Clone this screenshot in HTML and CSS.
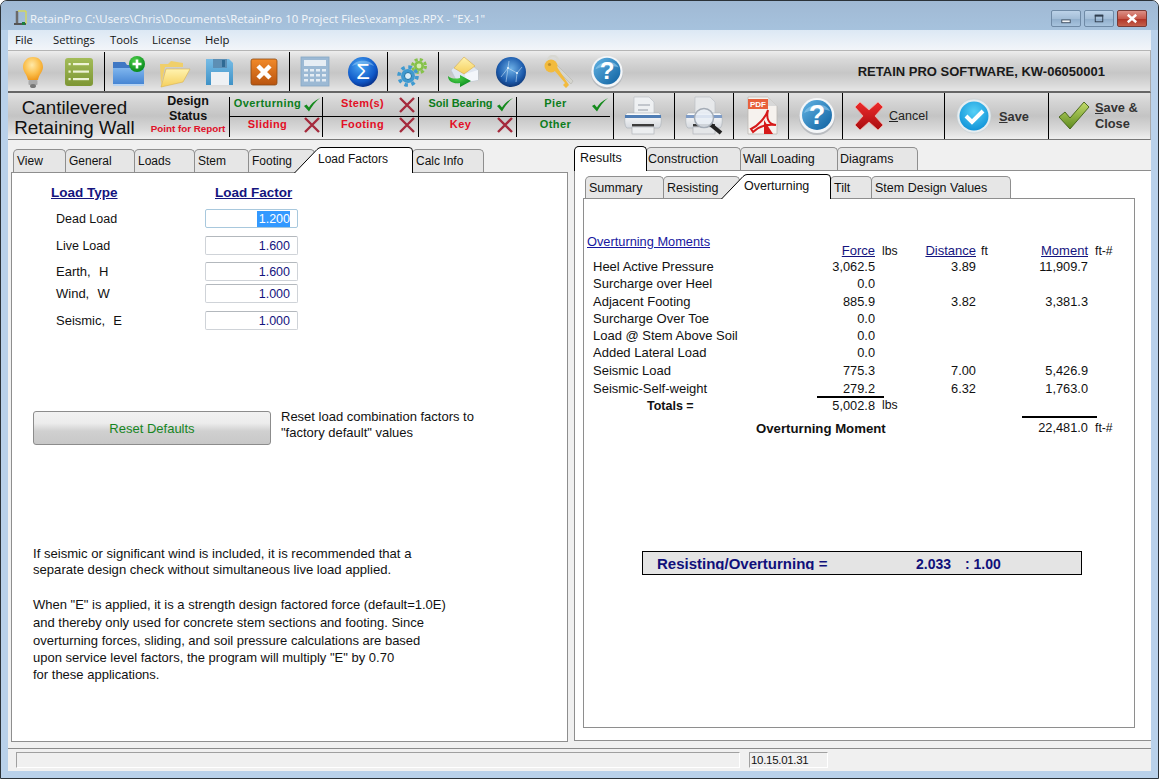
FILE: index.html
```html
<!DOCTYPE html>
<html lang="en">
<head>
<meta charset="utf-8">
<title>RetainPro</title>
<link rel="stylesheet" href="styles.css">
</head>
<body>
<svg class="defs" aria-hidden="true">
  <defs>
    <radialGradient id="gBulb" cx="45%" cy="35%" r="65%"><stop offset="0" stop-color="#ffe9a8"/><stop offset=".6" stop-color="#fbbf4c"/><stop offset="1" stop-color="#ef9a1e"/></radialGradient>
    <linearGradient id="gOlive" x1="0" y1="0" x2="0" y2="1"><stop offset="0" stop-color="#a3bc58"/><stop offset="1" stop-color="#7d9634"/></linearGradient>
    <linearGradient id="gFolder" x1="0" y1="0" x2="0" y2="1"><stop offset="0" stop-color="#7fb6ee"/><stop offset="1" stop-color="#3f7fd0"/></linearGradient>
    <radialGradient id="gGreen" cx="40%" cy="30%" r="70%"><stop offset="0" stop-color="#4fd04a"/><stop offset="1" stop-color="#078a1c"/></radialGradient>
    <linearGradient id="gYellow" x1="0" y1="0" x2="0" y2="1"><stop offset="0" stop-color="#fff3b0"/><stop offset="1" stop-color="#f5cf5c"/></linearGradient>
    <linearGradient id="gDisk" x1="0" y1="0" x2="0" y2="1"><stop offset="0" stop-color="#77bce6"/><stop offset="1" stop-color="#3f92c6"/></linearGradient>
    <linearGradient id="gOrange" x1="0" y1="0" x2="0" y2="1"><stop offset="0" stop-color="#f28a2a"/><stop offset="1" stop-color="#b9540f"/></linearGradient>
    <radialGradient id="gSigma" cx="40%" cy="30%" r="75%"><stop offset="0" stop-color="#4aa6f2"/><stop offset=".7" stop-color="#0f58c8"/><stop offset="1" stop-color="#06297e"/></radialGradient>
    <radialGradient id="gGlobe" cx="50%" cy="40%" r="65%"><stop offset="0" stop-color="#6fb2e8"/><stop offset=".65" stop-color="#1d5cad"/><stop offset="1" stop-color="#0b2c66"/></radialGradient>
    <linearGradient id="gHelp" x1="0" y1="0" x2="1" y2="1"><stop offset="0" stop-color="#63b4e4"/><stop offset="1" stop-color="#0d5f9f"/></linearGradient>
    <linearGradient id="gRed" x1="0" y1="0" x2="0" y2="1"><stop offset="0" stop-color="#ee2b2b"/><stop offset="1" stop-color="#a80c10"/></linearGradient>
    <radialGradient id="gCyan" cx="50%" cy="35%" r="70%"><stop offset="0" stop-color="#56d0f6"/><stop offset="1" stop-color="#0b8fd6"/></radialGradient>
    <linearGradient id="gCheck" x1="0" y1="0" x2="0" y2="1"><stop offset="0" stop-color="#c4dc6c"/><stop offset="1" stop-color="#5d8a1e"/></linearGradient>
    <linearGradient id="gPrinter" x1="0" y1="0" x2="0" y2="1"><stop offset="0" stop-color="#fdfdfd"/><stop offset="1" stop-color="#d5d9df"/></linearGradient>
    <symbol id="help" viewBox="0 0 38 38">
      <circle cx="19" cy="20" r="18" fill="#b9bcc0"/>
      <circle cx="19" cy="18.500" r="17.500" fill="#f4f6f8"/>
      <circle cx="19" cy="18" r="15" fill="url(#gHelp)"/>
      <path d="M6 16C10 6 28 5 32 14C25 11 14 12 6 16Z" fill="#9fd3f2" opacity=".55"/>
      <text x="19" y="27" class="glyph-q">?</text>
    </symbol>
    <symbol id="chk" viewBox="0 0 18 16">
      <path d="M1 9L6 14.500C9 9 12 5 17 1C11 4 8 7 6 10.500L3.500 7.500Z" fill="#148a1c"/>
    </symbol>
    <symbol id="crs" viewBox="0 0 18 16">
      <path d="M2 1L16 15M16 1L2 15" stroke="#a52a3c" stroke-width="2.400" fill="none"/>
    </symbol>
  </defs>
</svg>
<div class="window">
  <header class="titlebar">
    <svg class="app-icon" viewBox="0 0 14 16">
      <path d="M4 1V13" stroke="#6a6a6a" stroke-width="2.500"/>
      <path d="M5 1H13V14H8" stroke="#e7e22a" fill="none"/>
      <path d="M1 14H13" stroke="#555" stroke-width="2"/>
      <rect x="9" y="12" width="3" height="3" fill="#1a7f3c"/>
    </svg>
    <span class="title-text">RetainPro C:\Users\Chris\Documents\RetainPro 10 Project Files\examples.RPX - "EX-1"</span>
    <div class="caption">
      <span class="cap-btn"><svg viewBox="0 0 29 16" class="cap-svg"><rect x="10" y="9.500" width="9" height="3" fill="#f4f6f8" stroke="#3c4d60"/></svg></span>
      <span class="cap-btn"><svg viewBox="0 0 29 16" class="cap-svg"><rect x="10.500" y="4.500" width="8" height="7" fill="none" stroke="#2f3d4e" stroke-width="1"/><rect x="10" y="4" width="9" height="2" fill="#2f3d4e"/></svg></span>
      <span class="cap-btn cap-close"><svg viewBox="0 0 29 16" class="cap-svg"><path d="M10 4L19 12M19 4L10 12" stroke="#fff" stroke-width="2.600"/></svg></span>
    </div>
  </header>
  <nav class="menubar">
    <span class="menu-item menu-file">File</span>
    <span class="menu-item menu-settings">Settings</span>
    <span class="menu-item menu-tools">Tools</span>
    <span class="menu-item menu-license">License</span>
    <span class="menu-item">Help</span>
  </nav>

  <div class="toolbar">
    <div class="tb-group g1">
      <span class="tb-btn"><svg class="ico" viewBox="0 0 34 34"><path d="M17 2C10.500 2 7 7 7 12C7 17 11 19 12 25H22C23 19 27 17 27 12C27 7 23.500 2 17 2Z" fill="url(#gBulb)"/><rect x="12.500" y="25" width="9" height="5" rx="1" fill="#a9a9a9"/><ellipse cx="17" cy="31" rx="3" ry="2" fill="#777"/></svg></span>
      <span class="tb-btn"><svg class="ico" viewBox="0 0 34 34"><rect x="3" y="3" width="28" height="28" rx="3" fill="url(#gOlive)"/><g fill="#eef3d6"><rect x="11" y="8" width="16" height="2.200"/><rect x="11" y="15.500" width="16" height="2.200"/><rect x="11" y="23" width="16" height="2.200"/><rect x="6.500" y="8" width="2.200" height="2.200"/><rect x="6.500" y="15.500" width="2.200" height="2.200"/><rect x="6.500" y="23" width="2.200" height="2.200"/></g></svg></span>
    </div>
    <div class="tb-group g2">
      <span class="tb-btn"><svg class="ico" viewBox="0 0 34 34"><path d="M1 7H13L15 10H32V31H1Z" fill="#3f78c4"/><path d="M1 13H32V31H1Z" fill="url(#gFolder)"/><rect x="1" y="29" width="31" height="2" fill="#b8d4f2"/><circle cx="25" cy="9" r="8" fill="url(#gGreen)"/><path d="M25 4.500V13.500M20.500 9H29.500" stroke="#fff" stroke-width="2.600"/></svg></span>
      <span class="tb-btn"><svg class="ico" viewBox="0 0 34 34"><path d="M4 30L3 9H11L14 6L26 8V12H8Z" fill="#f0cf6a"/><path d="M4 32L9 14H33L26 27Z" fill="url(#gYellow)" stroke="#dcb44c" stroke-width=".6"/></svg></span>
      <span class="tb-btn"><svg class="ico" viewBox="0 0 34 34"><path d="M4 4H27L31 8V30H4Z" fill="url(#gDisk)"/><rect x="11" y="4" width="14" height="9" fill="#5d8fb5"/><rect x="20" y="5" width="3" height="7" fill="#2f6a94"/><rect x="9" y="17" width="18" height="13" fill="#eef1f4"/></svg></span>
      <span class="tb-btn"><svg class="ico" viewBox="0 0 34 34"><rect x="4" y="4" width="26" height="26" rx="2" fill="url(#gOrange)" stroke="#8e4a12" stroke-width=".8"/><path d="M11 11L23 23M23 11L11 23" stroke="#fff" stroke-width="4.500"/></svg></span>
    </div>
    <div class="tb-group g3">
      <span class="tb-btn"><svg class="ico" viewBox="0 0 34 34"><rect x="3" y="2" width="28" height="29" fill="#9cb9d4" stroke="#87a8c6" stroke-width=".8"/><rect x="6" y="5" width="22" height="6" fill="#e6edf4"/><g fill="#e4ecf3"><rect x="6" y="14" width="4" height="2.500"/><rect x="12" y="14" width="4" height="2.500"/><rect x="18" y="14" width="4" height="2.500"/><rect x="24" y="14" width="4" height="2.500"/><rect x="6" y="19" width="4" height="2.500"/><rect x="12" y="19" width="4" height="2.500"/><rect x="18" y="19" width="4" height="2.500"/><rect x="24" y="19" width="4" height="2.500"/><rect x="6" y="24" width="4" height="2.500"/><rect x="12" y="24" width="4" height="2.500"/><rect x="18" y="24" width="4" height="2.500"/><rect x="24" y="24" width="4" height="2.500"/></g></svg></span>
      <span class="tb-btn"><svg class="ico" viewBox="0 0 34 34"><circle cx="17" cy="17" r="15" fill="url(#gSigma)"/><path d="M6 11C10 4 24 4 28 11C22 8 12 8 6 11Z" fill="#a7d8f8" opacity=".45"/><text x="17" y="24" class="glyph-s">Σ</text></svg></span>
    </div>
    <div class="tb-group g4">
      <span class="tb-btn"><svg class="ico" viewBox="0 0 34 34"><circle cx="24" cy="11" r="5" fill="#86c24a"/><circle cx="24" cy="11" r="6.500" fill="none" stroke="#86c24a" stroke-width="3" stroke-dasharray="3 2.100"/><circle cx="24" cy="11" r="2.400" fill="#d6eeb4"/><circle cx="13" cy="21" r="7" fill="#3f9ad0"/><circle cx="13" cy="21" r="9" fill="none" stroke="#3f9ad0" stroke-width="3.600" stroke-dasharray="3.500 3.570"/><circle cx="13" cy="21" r="3.500" fill="#d9eef8" stroke="#1e6f9f"/></svg></span>
    </div>
    <div class="tb-group g5">
      <span class="tb-btn"><svg class="ico" viewBox="0 0 34 34"><path d="M5 15L18 4L32 15V25L12 29Z" fill="#dfe6f0" stroke="#b7c2d2" stroke-width=".6"/><path d="M8 13L18 2L29 11L18 19Z" fill="url(#gYellow)" stroke="#d4a94a" stroke-width=".6"/><path d="M19 19L32 15V25L20 27Z" fill="#f3f6fa"/><path d="M2 21C2 27 8 29 14 28V32L25 26L14 20V23C10 24 5 24 2 21Z" fill="url(#gGreen)"/></svg></span>
      <span class="tb-btn"><svg class="ico" viewBox="0 0 34 34"><circle cx="17" cy="17" r="15" fill="url(#gGlobe)"/><path d="M7 22L14 13L23 18L28 12M14 13L15 6M14 13L12 27M23 18L22 27" stroke="#cfe6f8" stroke-width=".7" fill="none" opacity=".8"/><circle cx="14" cy="13" r="1" fill="#eaf6ff"/><circle cx="23" cy="18" r="1" fill="#eaf6ff"/></svg></span>
      <span class="tb-btn"><svg class="ico" viewBox="0 0 34 34"><circle cx="11" cy="6" r="5" fill="none" stroke="#d8d8d2" stroke-width="2.500"/><path d="M14 9L31 26L29 29L12 12Z" fill="#d5d5cf" stroke="#aeaea6" stroke-width=".5"/><circle cx="9" cy="11" r="6.500" fill="#f2bb3e"/><circle cx="7.500" cy="9.500" r="1.600" fill="#c08f28"/><path d="M12 15L23 28L21 30L24 33L27 30L25 27L15 12Z" fill="#f2bb3e"/></svg></span>
      <span class="tb-btn"><svg class="ico" viewBox="0 0 34 34"><use href="#help" width="34" height="34"/></svg></span>
    </div>
    <div class="licence">RETAIN PRO SOFTWARE, KW-06050001</div>
  </div>

  <div class="statusband">
    <div class="wall-title"><span>Cantilevered</span><span>Retaining Wall</span></div>
    <div class="design"><span>Design</span><span>Status</span><span class="point">Point for Report</span></div>
    <div class="checks">
      <div class="ck ck1 ok top">Overturning<svg class="mark"><use href="#chk"/></svg></div>
      <div class="ck ck2 bad top">Stem(s)<svg class="mark"><use href="#crs"/></svg></div>
      <div class="ck ck3 ok top">Soil Bearing<svg class="mark"><use href="#chk"/></svg></div>
      <div class="ck ck4 ok top">Pier<svg class="mark"><use href="#chk"/></svg></div>
      <div class="ck ck1 bad">Sliding<svg class="mark"><use href="#crs"/></svg></div>
      <div class="ck ck2 bad">Footing<svg class="mark"><use href="#crs"/></svg></div>
      <div class="ck ck3 bad">Key<svg class="mark"><use href="#crs"/></svg></div>
      <div class="ck ck4 ok">Other</div>
    </div>
    <div class="act a-print"><svg class="ico-lg" viewBox="0 0 38 40"><path d="M10 1H25L30 6V22H10Z" fill="#eef0f2" stroke="#bcc0c6" stroke-width=".7"/><path d="M14 9H26M14 14H24" stroke="#c2c6cc" stroke-width="2"/><path d="M3 17H35C38 18 38 31 35 32H3C0 31 0 18 3 17Z" fill="url(#gPrinter)" stroke="#a8aeb6" stroke-width=".6"/><rect x="1" y="19" width="36" height="3" fill="#4f7db5"/><rect x="8" y="28" width="22" height="2.500" fill="#3c3c3c"/><rect x="8" y="31" width="22" height="7" fill="#eceef0" stroke="#a8acb2" stroke-width=".6"/></svg></div>
    <div class="act a-prev"><svg class="ico-lg" viewBox="0 0 38 40"><path d="M10 1H25L30 6V22H10Z" fill="#e6e8ea" stroke="#bcc0c6" stroke-width=".7"/><path d="M3 17H35C38 18 38 31 35 32H3C0 31 0 18 3 17Z" fill="url(#gPrinter)" stroke="#a8aeb6" stroke-width=".6"/><rect x="1" y="19" width="36" height="3" fill="#7f9cc6"/><rect x="8" y="28" width="22" height="2.500" fill="#3c3c3c"/><rect x="8" y="31" width="22" height="7" fill="#e4e6e8" stroke="#a8acb2" stroke-width=".6"/><path d="M25 28L36 37" stroke="#222" stroke-width="4"/><circle cx="19" cy="22" r="9.500" fill="#e9eff6" fill-opacity=".85" stroke="#a4acb6" stroke-width="1.500"/></svg></div>
    <div class="act a-pdf"><svg class="ico-lg" viewBox="0 0 38 40"><path d="M6 1H26L35 10V38H6Z" fill="#f6f2ee" stroke="#bdb9b4" stroke-width=".8"/><path d="M26 1V10H35Z" fill="#d8d8d8"/><rect x="6" y="3" width="20" height="10" fill="#e8613c"/><text x="16" y="11" class="glyph-pdf">PDF</text><path d="M9 33C16 30 24 21 26 14C24 22 26 28 34 29C25 28 17 30 11 36Z" fill="none" stroke="#d61a1a" stroke-width="2"/><path d="M22 24L22 38H31Z" fill="#d61a1a"/></svg></div>
    <div class="act a-help"><svg class="ico-help" viewBox="0 0 38 38"><use href="#help" width="38" height="38"/></svg></div>
    <div class="act a-cancel"><svg class="ico-act" viewBox="0 0 32 32"><path d="M2 7L7 2L16 10L25 2L30 7L22 16L30 25L25 30L16 22L7 30L2 25L10 16Z" fill="url(#gRed)" stroke="#f6b0a8" stroke-width=".8"/></svg><span class="act-text cancel-text"><u>C</u>ancel</span></div>
    <div class="act a-save"><svg class="ico-save" viewBox="0 0 36 36"><circle cx="18" cy="18" r="17" fill="#e7edf0" stroke="#c3ccd2" stroke-width=".6"/><circle cx="18" cy="18" r="14.500" fill="url(#gCyan)"/><path d="M10 18L16 24L27 13" stroke="#fff" stroke-width="4" fill="none"/></svg><span class="act-text save-text"><u>S</u>ave</span></div>
    <div class="act a-close"><svg class="ico-act" viewBox="0 0 32 32"><path d="M1 17L7 12L12 18L26 2L31 7L12 29Z" fill="url(#gCheck)" stroke="#3f5f14" stroke-width=".9"/></svg><span class="act-text close-text"><span><u>S</u>ave &amp;</span><span>Close</span></span></div>
  </div>

  <main class="main">
    <section class="left">
      <div class="tabs tabs-left">
        <div class="tab tl1">View</div>
        <div class="tab tl2">General</div>
        <div class="tab tl3">Loads</div>
        <div class="tab tl4">Stem</div>
        <div class="tab tl5">Footing</div>
        <div class="tab tab-slant tl6">
          <svg class="slant" viewBox="0 0 119 26" preserveAspectRatio="none"><path d="M0.500 26L23 2.500Q25 .5 27 .5H115Q118.500 .5 118.500 4V26" fill="#fff" stroke="#000"/></svg>
          <span class="slant-text">Load Factors</span>
        </div>
        <div class="tab tl7">Calc Info</div>
      </div>
      <div class="panel-left">
        <div class="lf-head"><span class="lf-h1">Load Type</span><span class="lf-h2">Load Factor</span></div>
        <div class="lf-row r1"><span class="lf-label">Dead Load</span><span class="field field-on"><span class="sel">1.200</span></span></div>
        <div class="lf-row r2"><span class="lf-label">Live Load</span><span class="field">1.600</span></div>
        <div class="lf-row r3"><span class="lf-label lf-wide">Earth,&nbsp; H</span><span class="field">1.600</span></div>
        <div class="lf-row r4"><span class="lf-label lf-wide">Wind,&nbsp; W</span><span class="field">1.000</span></div>
        <div class="lf-row r5"><span class="lf-label lf-wide">Seismic,&nbsp; E</span><span class="field">1.000</span></div>
        <div class="reset-row">
          <div class="reset-btn">Reset Defaults</div>
          <p class="reset-note">Reset load combination factors to<br>"factory default" values</p>
        </div>
        <div class="note n1">
          <div>If seismic or significant wind is included, it is recommended that a</div>
          <div>separate design check without simultaneous live load applied.</div>
        </div>
        <div class="note n2">
          <div class="h18">When "E" is applied, it is a strength design factored force (default=1.0E)</div>
          <div class="h18">and thereby only used for concrete stem sections and footing. Since</div>
          <div class="h18">overturning forces, sliding, and soil pressure calculations are based</div>
          <div class="h16">upon service level factors, the program will multiply "E" by 0.70</div>
          <div class="h18">for these applications.</div>
        </div>
      </div>
    </section>

    <section class="right">
      <div class="tabs tabs-right">
        <div class="tab tab-on tr1">Results</div>
        <div class="tab tr2">Construction</div>
        <div class="tab tr3">Wall Loading</div>
        <div class="tab tr4">Diagrams</div>
      </div>
      <div class="panel-outer">
        <div class="tabs tabs-inner">
          <div class="tab ti1">Summary</div>
          <div class="tab ti2">Resisting</div>
          <div class="tab tab-slant ti3">
            <svg class="slant" viewBox="0 0 110 25" preserveAspectRatio="none"><path d="M0.500 25L22 2.500Q24 .5 26 .5H106Q109.500 .5 109.500 4V25" fill="#fff" stroke="#000"/></svg>
            <span class="slant-text">Overturning</span>
          </div>
          <div class="tab ti4">Tilt</div>
          <div class="tab ti5">Stem Design Values</div>
        </div>
        <div class="panel-inner">
          <div class="ot">
            <div class="ot-head"><span class="ot-title">Overturning Moments</span></div>
            <div class="hd num end">Force</div><div class="unit end">lbs</div><div class="hd num end">Distance</div><div class="unit unit-ft end">ft</div><div class="hd num end">Moment</div><div class="unit end">ft-#</div>

            <div class="lab">Heel Active Pressure</div><div class="num">3,062.5</div><div></div><div class="num">3.89</div><div></div><div class="num">11,909.7</div><div></div>
            <div class="lab">Surcharge over Heel</div><div class="num">0.0</div><div></div><div></div><div></div><div></div><div></div>
            <div class="lab">Adjacent Footing</div><div class="num">885.9</div><div></div><div class="num">3.82</div><div></div><div class="num">3,381.3</div><div></div>
            <div class="lab">Surcharge Over Toe</div><div class="num">0.0</div><div></div><div></div><div></div><div></div><div></div>
            <div class="lab">Load @ Stem Above Soil</div><div class="num">0.0</div><div></div><div></div><div></div><div></div><div></div>
            <div class="lab">Added Lateral Load</div><div class="num">0.0</div><div></div><div></div><div></div><div></div><div></div>
            <div class="lab">Seismic Load</div><div class="num">775.3</div><div></div><div class="num">7.00</div><div></div><div class="num">5,426.9</div><div></div>
            <div class="lab">Seismic-Self-weight</div><div class="num rule-force">279.2</div><div></div><div class="num">6.32</div><div></div><div class="num">1,763.0</div><div></div>
            <div class="lab total-lab">Totals =</div><div class="num">5,002.8</div><div class="unit">lbs</div><div></div><div></div><div></div><div></div>
            <div class="lab om-lab"><span class="clip">Overturning Moment</span></div><div></div><div></div><div></div><div></div><div class="num rule-moment end">22,481.0</div><div class="unit end">ft-#</div>
          </div>
          <div class="ratio"><div class="ratio-clip"><span class="ratio-a">Resisting/Overturning =</span><span class="ratio-b">2.033</span><span class="ratio-c">: 1.00</span></div></div>
        </div>
      </div>
    </section>
  </main>

  <footer class="statusbar">
    <div class="sb-box sb-1"></div>
    <div class="sb-box sb-2">10.15.01.31</div>
  </footer>
</div>
</body>
</html>
```
FILE: styles.css
```css
* { box-sizing: border-box; }
html, body { margin: 0; padding: 0; }
body {
  width: 1159px;
  height: 779px;
  overflow: hidden;
  background: #fff;
  font-family: "Liberation Sans", Arial, sans-serif;
  font-size: 12px;
  color: #111;
}
.defs { position: absolute; width: 0; height: 0; }
.glyph-q { font: bold 27px "Liberation Sans", Arial, sans-serif; fill: #fff; text-anchor: middle; }
.glyph-s { font: 22px "Liberation Sans", Arial, sans-serif; fill: #fff; text-anchor: middle; }
.glyph-pdf { font: bold 8px "Liberation Sans", Arial, sans-serif; fill: #fff; text-anchor: middle; }

.window {
  width: 1159px;
  height: 779px;
  padding: 0 7px 7px;
  border: 1px solid #2b3238;
  border-radius: 7px 7px 0 0;
  background: #b9d1ea;
  display: flex;
  flex-direction: column;
  overflow: hidden;
}

/* title bar */
.titlebar {
  height: 29px;
  margin: 0 -7px;
  padding: 6px 11px 0 12px;
  display: flex;
  align-items: center;
  background: linear-gradient(#a0b9d4, #a6c2dd);
  flex: none;
}
.app-icon { width: 14px; height: 16px; margin-right: 3px; margin-top: -2px; flex: none; }
.title-text {
  font-family: "Open Sans", sans-serif;
  font-size: 11.4px;
  color: #f2f6fa;
  white-space: nowrap;
}
.caption { margin-left: auto; display: flex; gap: 3px; }
.cap-btn {
  width: 30px;
  height: 17px;
  border: 1px solid #6f8aa6;
  border-radius: 2px;
  background: linear-gradient(#bcd2e8 0, #a4bed8 50%, #8fadcb 51%, #a8c4de 100%);
  display: block;
}
.cap-close { background: linear-gradient(#dc9086 0, #c85a4c 50%, #b03224 51%, #c4604c 100%); border-color: #7a3a34; }
.cap-svg { display: block; width: 28px; height: 15px; }

/* menu */
.menubar {
  height: 20px;
  padding: 0 0 2px 7px;
  display: flex;
  align-items: center;
  flex: none;
  background: linear-gradient(#dce8f4, #f2f5f9);
  font-family: "Open Sans", sans-serif;
  font-size: 11.3px;
  color: #111;
}
.menu-file { width: 38px; }
.menu-settings { width: 57px; }
.menu-tools { width: 42px; }
.menu-license { width: 53px; }

/* toolbar */
.toolbar {
  height: 43px;
  flex: none;
  display: flex;
  align-items: stretch;
  background: linear-gradient(#ededed 0, #d9d9d9 20%, #c6c6c6 55%, #d6d6d6 80%, #e6e6e6 100%);
  border-top: 1px solid #b5b5b5;
  border-bottom: 2px solid #666;
  border-right: 1px solid #aaa;
}
.tb-group { display: flex; border-right: 1px solid #000; flex: none; height: 39px; margin-top: 1px; }
.g1 { padding: 0 2px; width: 97px; }
.g2 { padding-left: 1px; width: 185px; }
.g3 { padding-left: 1px; width: 98px; }
.g4 { width: 51px; }
.g5 { border-right: 0; }
.tb-btn { width: 48px; display: flex; align-items: center; justify-content: center; }
.g1 .tb-btn { width: 46px; }
.g2 .tb-btn { width: 45px; }
.ico { width: 34px; height: 34px; display: block; }
.licence {
  margin-left: auto;
  padding: 1px 45px 0 0;
  align-self: center;
  font-weight: bold;
  font-size: 13px;
  color: #1a1a1a;
  white-space: nowrap;
}

/* status band */
.statusband {
  height: 47px;
  flex: none;
  display: flex;
  background: linear-gradient(#e2e2e2 0, #d4d4d4 20%, #c4c4c4 50%, #d8d8d8 78%, #efefef 100%);
  border-bottom: 1px solid #777;
  border-right: 1px solid #aaa;
}
.wall-title {
  width: 133px;
  display: flex;
  flex-direction: column;
  align-items: center;
  font-size: 18.8px;
  line-height: 19.5px;
  padding-top: 5px;
  color: #111;
  white-space: nowrap;
}
.design {
  width: 82px;
  margin-left: 6px;
  display: flex;
  flex-direction: column;
  align-items: center;
  font-weight: bold;
  font-size: 12.5px;
  line-height: 15px;
  padding-top: 1px;
}
.design .point { color: #e0102a; font-size: 9.8px; line-height: 11px; margin-top: -1px; white-space: nowrap; }
.checks {
  width: 381px;
  height: 40px;
  margin: 4px 3px 0 0;
  display: grid;
  grid-template-columns: 93px 96px 98px 94px;
  grid-template-rows: 20px 20px;
  font-weight: bold;
  font-size: 11px;
  letter-spacing: .4px;
  line-height: 13px;
}
.ck {
  border-left: 1px solid #000;
  display: flex;
  justify-content: center;
  position: relative;
  padding-top: 1px;
  white-space: nowrap;
}
.top { border-bottom: 1px solid #000; padding-top: 0; }
.ck1 { padding-right: 17px; }
.ck2 { padding-right: 16px; }
.ck3 { padding-right: 14px; }
.ck3.top { letter-spacing: 0; }
.ck4 { padding-right: 16px; }
.ok { color: #0c7d1c; }
.bad { color: #e20f25; }
.mark { position: absolute; right: 1px; top: 0; width: 18px; height: 16px; }
.ck2 .mark { right: 2px; }
.ck3 .mark { right: 2px; }
.ck4 .mark { right: 1px; }
.act {
  border-left: 1px solid #000;
  display: flex;
  align-items: center;
  flex: none;
}
.a-print { width: 61px; padding-left: 10px; }
.a-prev { width: 59px; padding-left: 10px; }
.a-pdf { width: 55px; padding-left: 8px; }
.a-help { width: 54px; padding-left: 9px; }
.a-cancel { width: 102px; padding-left: 10px; }
.a-save { width: 104px; padding-left: 11px; }
.a-close { flex: 1; padding-left: 9px; }
.ico-lg { width: 38px; height: 40px; display: block; flex: none; }
.ico-help { width: 38px; height: 38px; display: block; }
.ico-act { width: 32px; height: 32px; display: block; flex: none; }
.ico-save { width: 36px; height: 36px; display: block; flex: none; }
.act-text { color: #222; white-space: nowrap; }
.cancel-text { margin-left: 4px; font-size: 12.5px; }
.save-text { margin-left: 7px; font-size: 12.8px; font-weight: bold; color: #333; }
.close-text { margin-left: 5px; display: flex; flex-direction: column; font-weight: bold; font-size: 12.8px; line-height: 16px; color: #333; }

/* main */
.main {
  height: 608px;
  flex: none;
  display: flex;
  background: #f0f0f0;
}
.left { width: 563px; padding-left: 3px; margin-right: 3px; padding-top: 7px; flex: none; }
.right { flex: 1; padding-top: 6px; min-width: 0; }

/* tabs */
.tabs { display: flex; align-items: flex-end; font-size: 12.5px; color: #111; }
.tabs-left { height: 25px; padding-left: 2px; font-size: 12px; }
.tabs-right { height: 24px; position: relative; z-index: 1; }
.tabs-inner { height: 24px; margin: 3px 0 0; padding-left: 2px; position: relative; z-index: 1; }
.tab {
  flex: none;
  height: 23px;
  line-height: 23px;
  padding-left: 3px;
  margin-right: -1px;
  background: #e6e6e6;
  border: 1px solid #8e8e8e;
  border-bottom: 0;
  border-radius: 5px 5px 0 0;
  white-space: nowrap;
  overflow: hidden;
}
.tabs-inner .tab { height: 22px; line-height: 22px; }
.tabs-right .tab { height: 23px; line-height: 22px; padding-left: 1px; }
.tabs-right .tr3, .tabs-right .tr4 { padding-left: 2px; }
.tabs-right .tab-on {
  height: 25px;
  line-height: 22px;
  background: #fff;
  border-color: #000;
  margin-bottom: -1px;
  position: relative;
  z-index: 2;
  padding-left: 5px;
}
.tabs .tab-slant {
  position: relative;
  z-index: 2;
  background: none;
  border: 0;
  padding: 0;
  overflow: visible;
  margin-bottom: -1px;
}
.tabs-left .tab-slant { height: 26px; line-height: 24px; }
.tabs-inner .tab-slant { height: 25px; line-height: 24px; }
.slant { position: absolute; left: 0; top: 0; width: 100%; height: 100%; display: block; }
.slant-text { position: relative; }
.tl6 .slant-text { margin-left: 24px; }
.ti3 .slant-text { margin-left: 23px; }
.tl1 { width: 53px; } .tl2 { width: 70px; } .tl3 { width: 61px; } .tl4 { width: 55px; }
.tl5 { width: 67px; }
.tabs-left .tl6 { width: 119px; margin-left: -20px; margin-right: -1px; }
.tl7 { width: 72px; }
.tr1 { width: 73px; } .tr2 { width: 95px; } .tr3 { width: 98px; } .tr4 { width: 81px; }
.ti1 { width: 79px; } .ti2 { width: 77px; }
.tabs-inner .ti3 { width: 110px; margin-left: -18px; margin-right: -1px; }
.ti4 { width: 42px; } .ti5 { width: 140px; }

/* left panel */
.panel-left {
  width: 557px;
  height: 570px;
  background: #fff;
  border: 1px solid #8e8e8e;
  padding: 12px 0 0 21px;
  overflow: hidden;
}
.lf-head { display: flex; height: 16px; line-height: 16px; font-weight: bold; font-size: 13.5px; color: #14147e; text-decoration: underline; margin-left: 18px; }
.lf-h1 { width: 164px; }
.lf-row { display: flex; align-items: center; height: 19px; padding-left: 23px; }
.r1 { margin-top: 8px; }
.r2 { margin-top: 8px; }
.r3 { margin-top: 7px; }
.r4 { margin-top: 3px; }
.r5 { margin-top: 8px; }
.lf-label { width: 149px; font-size: 12.5px; flex: none; white-space: nowrap; }
.lf-wide { font-size: 13px; word-spacing: .5px; }
.field {
  width: 93px;
  height: 19px;
  line-height: 17px;
  padding-top: 1px;
  flex: none;
  text-align: right;
  padding-right: 7px;
  border: 1px solid #cfd3d8;
  border-top-color: #b3b8bd;
  border-radius: 2px;
  color: #14147e;
  font-size: 12.5px;
  background: #fff;
}
.field-on { border-color: #a8c8dd; }
.sel { display: inline-block; background: #3399ff; color: #fff; line-height: 16px; height: 16px; padding-left: 2px; vertical-align: top; }
.reset-row { display: flex; margin-top: 81px; height: 34px; }
.reset-btn {
  width: 238px;
  height: 34px;
  line-height: 33px;
  text-align: center;
  color: #17851f;
  font-size: 13px;
  border: 1px solid #8c8c8c;
  border-radius: 3px;
  background: linear-gradient(#f2f2f2 0, #ececec 35%, #d0d0d0 60%, #c8c8c8 100%);
  flex: none;
}
.reset-note { margin: -2px 0 0 10px; font-size: 13px; line-height: 16px; white-space: nowrap; }
.note { font-size: 13px; white-space: nowrap; }
.n1 { margin-top: 101px; line-height: 16px; font-size: 13.1px; }
.n2 { margin-top: 18px; }
.h18 { height: 18px; line-height: 18px; }
.h16 { height: 16px; line-height: 16px; }

/* right panels */
.panel-outer {
  height: 571px;
  background: #fff;
  border: 1px solid #8e8e8e;
  border-right: 0;
  padding-left: 8px;
}
.panel-inner {
  width: 552px;
  height: 530px;
  border: 1px solid #8e8e8e;
  background: #fff;
  padding: 34px 0 0 3px;
  overflow: hidden;
}
.ot {
  display: grid;
  grid-template-columns: 218px 70px 50px 51px 54px 58px 37px;
  grid-template-rows: 25px 17px 18px 17px 18px 16px 18px 18px 17px 18px 20px;
  font-size: 12.8px;
  line-height: 16px;
  white-space: nowrap;
}
.ot-head { display: block; margin-top: 1px; }
.ot-title { color: #1717a0; text-decoration: underline; font-size: 12.8px; }
.hd { color: #14147e; text-decoration: underline; font-size: 13px; }
.num { text-align: right; position: relative; align-self: center; }
.unit { padding-left: 7px; font-size: 12.2px; }
.unit-ft { padding-left: 5px; }
.lab { padding-left: 6px; align-self: center; font-size: 13px; }
.ot .end { align-self: end; margin-bottom: -1px; }
.total-lab { padding-left: 60px; font-weight: bold; font-size: 12.5px; }
.ot .om-lab { padding-left: 169px; font-weight: bold; font-size: 13.2px; align-self: end; margin-bottom: -1px; }
.clip { display: block; width: max-content; height: 14px; overflow: hidden; line-height: 14px; }
.rule-force::after {
  content: "";
  position: absolute;
  left: 12px;
  right: -9px;
  bottom: -1px;
  height: 2px;
  background: #000;
}
.rule-moment::before {
  content: "";
  position: absolute;
  left: -8px;
  right: -9px;
  top: -4px;
  height: 2px;
  background: #000;
}
.ratio {
  width: 440px;
  height: 24px;
  margin: 116px 0 0 55px;
  border: 1px solid #000;
  background: #e4e4e4;
  padding: 4px 0 0 14px;
}
.ratio-clip {
  display: flex;
  height: 14px;
  overflow: hidden;
  font-weight: bold;
  font-size: 14px;
  line-height: 16px;
  color: #10107a;
  white-space: nowrap;
}
.ratio-a { width: 259px; font-size: 15px; }
.ratio-b { width: 49px; }

/* status bar */
.statusbar {
  height: 23px;
  flex: none;
  background: #f0f0f0;
  border-top: 1px solid #8a8a8a;
  padding: 3px 0 0 8px;
  display: flex;
  gap: 9px;
}
.sb-box {
  height: 16px;
  border: 1px solid #fff;
  border-top-color: #a0a0a0;
  border-left-color: #a0a0a0;
  font-size: 11.5px;
  line-height: 15px;
  padding-left: 1px;
  letter-spacing: -.3px;
}
.sb-1 { width: 724px; }
.sb-2 { width: 79px; }
```
